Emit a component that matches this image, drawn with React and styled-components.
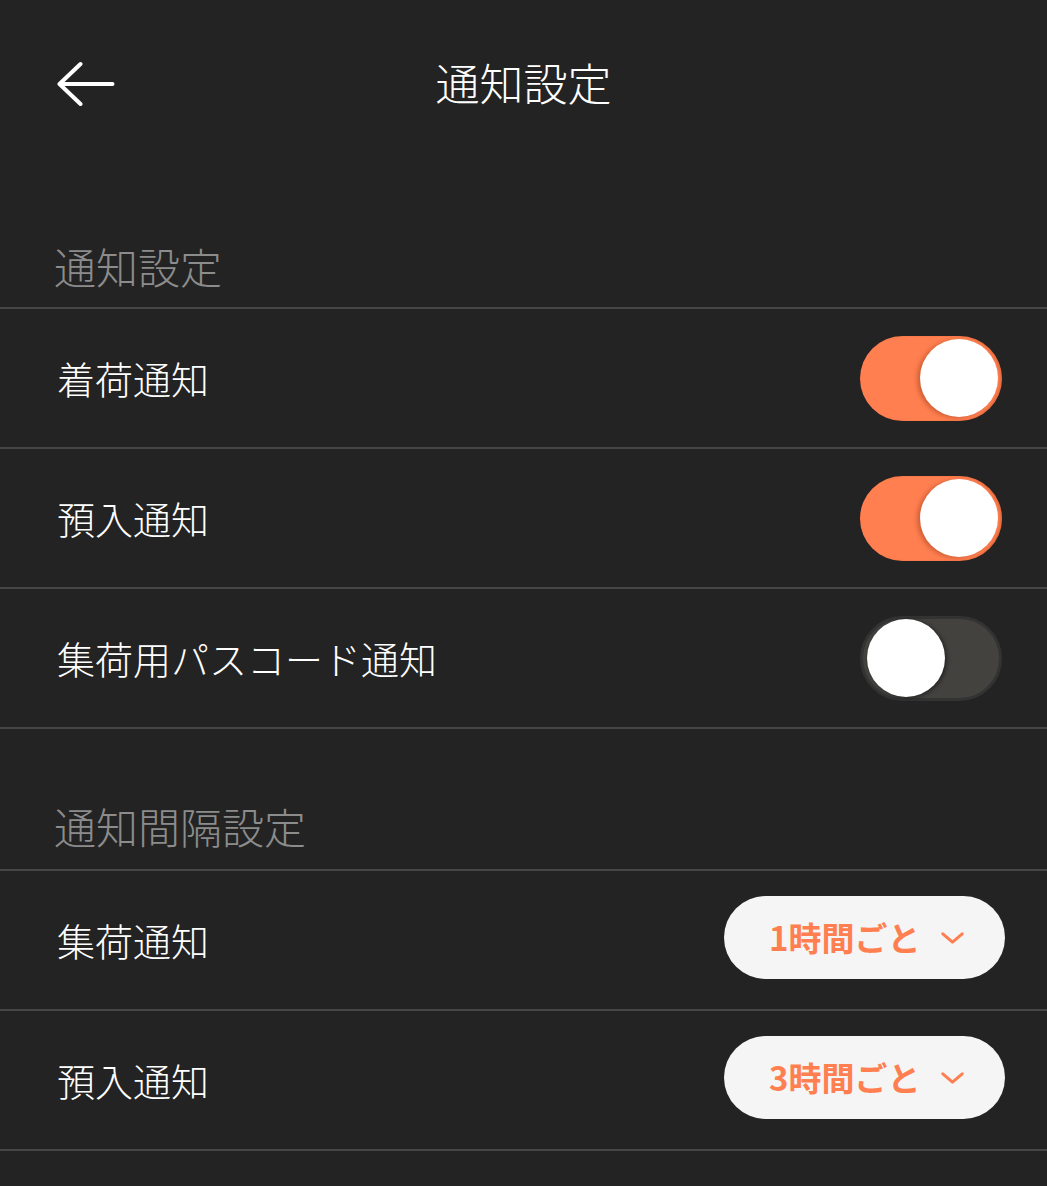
import React, { useState } from "react";
import styled, { createGlobalStyle } from "styled-components";

const GlobalStyle = createGlobalStyle`
  html, body {
    margin: 0;
    padding: 0;
    background: #232323;
  }
  body {
    font-family: "Noto Sans CJK JP", "Noto Sans", sans-serif;
    -webkit-font-smoothing: antialiased;
  }
  * { box-sizing: border-box; }
`;

const Page = styled.div`
  width: 100%;
  min-height: 1186px;
  background: #232323;
  color: #ffffff;
`;

const Header = styled.header`
  height: 167px;
  display: grid;
  grid-template-columns: 1fr auto 1fr;
  align-items: center;
`;

const BackButton = styled.button`
  justify-self: start;
  margin-left: 57px;
  padding: 0;
  border: none;
  background: none;
  display: flex;
  cursor: pointer;
`;

const Title = styled.h1`
  margin: 0 0 4px;
  font-size: 44px;
  line-height: 1;
  font-weight: 300;
  color: #ffffff;
`;

const SectionTitle = styled.div`
  height: 140px;
  display: flex;
  align-items: flex-end;
  padding: 0 0 ${(p) => p.$bottom}px 54px;
  font-size: 42px;
  line-height: 1;
  font-weight: 300;
  color: #8c8c8c;
`;

const List = styled.ul`
  list-style: none;
  margin: 0;
  padding: 0;
  border-top: 2px solid #464646;
`;

const Row = styled.li`
  height: 140px;
  display: flex;
  align-items: center;
  justify-content: space-between;
  padding: 0 ${(p) => p.$right}px 0 57px;
  border-bottom: 2px solid #464646;
`;

const Label = styled.span`
  font-size: 38px;
  line-height: 1;
  font-weight: 300;
  color: #ffffff;
`;

const Track = styled.button`
  width: 142px;
  height: 85px;
  border-radius: 43px;
  padding: 0 4px;
  display: flex;
  align-items: center;
  justify-content: ${(p) => (p.$on ? "flex-end" : "flex-start")};
  background: ${(p) => (p.$on ? "#ff7f50" : "#44423f")};
  border: ${(p) => (p.$on ? "none" : "3px solid #333333")};
  box-shadow: ${(p) => (p.$on ? "inset -2px 0 2px rgba(180,70,30,0.35)" : "none")};
  cursor: pointer;
  transition: background 0.2s;
`;

const Knob = styled.span`
  width: 78px;
  height: 78px;
  border-radius: 50%;
  background: #ffffff;
  box-shadow: ${(p) =>
    p.$on ? "-3px 1px 4px rgba(120,40,10,0.35)" : "2px 1px 4px rgba(0,0,0,0.45)"};
`;

const Select = styled.button`
  width: 281px;
  height: 83px;
  border-radius: 42px;
  border: none;
  background: #f5f5f5;
  display: flex;
  align-items: center;
  justify-content: space-between;
  padding: 0 41px 0 45px;
  margin-top: -5px;
  cursor: pointer;
  font-family: inherit;
`;

const SelectText = styled.span`
  font-size: 33px;
  line-height: 1;
  font-weight: 700;
  color: #ff7f50;
`;

const Toggle = ({ initial }) => {
  const [on, setOn] = useState(initial);
  return (
    <Track $on={on} onClick={() => setOn(!on)} aria-pressed={on}>
      <Knob $on={on} />
    </Track>
  );
};

const Chevron = () => (
  <svg width="23" height="12" viewBox="0 0 23 12" fill="none">
    <path
      d="M1.8 1.8 L11.5 10.2 L21.2 1.8"
      stroke="#ff7f50"
      strokeWidth="3"
      strokeLinecap="round"
      strokeLinejoin="round"
    />
  </svg>
);

const BackArrow = () => (
  <svg width="58" height="46" viewBox="0 0 58 46" fill="none">
    <path
      d="M2.5 23 H55.5 M23.5 3 L2.5 23 L23.5 43"
      stroke="#ffffff"
      strokeWidth="4"
      strokeLinecap="round"
      strokeLinejoin="round"
    />
  </svg>
);

const toggles = [
  { label: "着荷通知", on: true },
  { label: "預入通知", on: true },
  { label: "集荷用パスコード通知", on: false },
];

const intervals = [
  { label: "集荷通知", value: "1時間ごと" },
  { label: "預入通知", value: "3時間ごと" },
];

export default function App() {
  return (
    <Page>
      <GlobalStyle />
      <Header>
        <BackButton aria-label="戻る">
          <BackArrow />
        </BackButton>
        <Title>通知設定</Title>
        <div />
      </Header>

      <SectionTitle $bottom={20}>通知設定</SectionTitle>
      <List>
        {toggles.map((t) => (
          <Row key={t.label} $right={45}>
            <Label>{t.label}</Label>
            <Toggle initial={t.on} />
          </Row>
        ))}
      </List>

      <SectionTitle $bottom={22}>通知間隔設定</SectionTitle>
      <List>
        {intervals.map((i) => (
          <Row key={i.label} $right={42}>
            <Label>{i.label}</Label>
            <Select>
              <SelectText>{i.value}</SelectText>
              <Chevron />
            </Select>
          </Row>
        ))}
      </List>
    </Page>
  );
}
